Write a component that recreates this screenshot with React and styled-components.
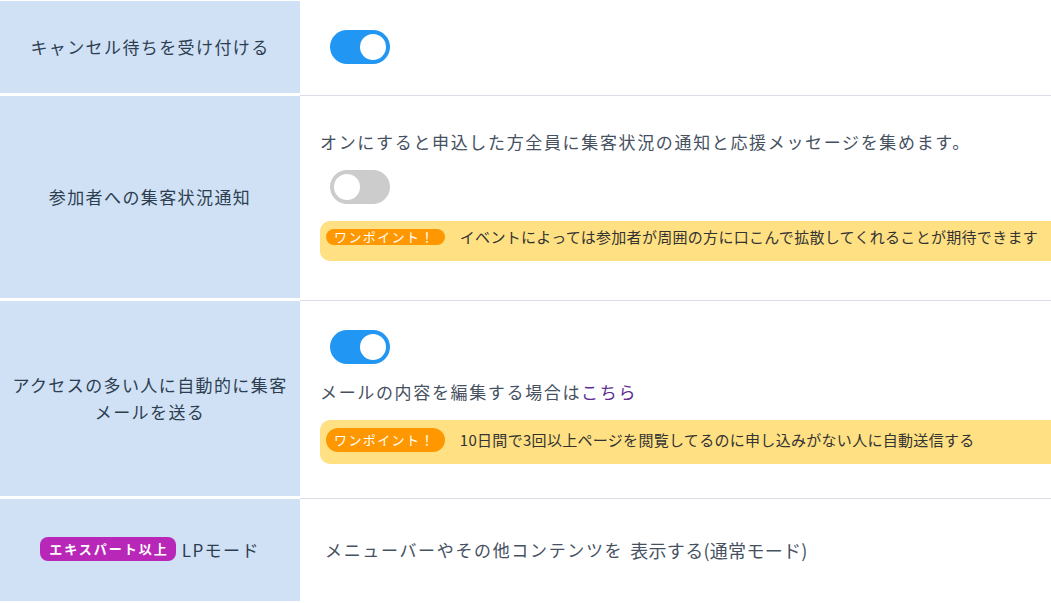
import React from 'react'
import styled, { createGlobalStyle } from 'styled-components'

const Global = createGlobalStyle`
html, body {
  margin: 0;
  background: #fff;
  overflow: hidden;
}
body {
  font-family: "Noto Sans CJK JP", "Noto Sans", sans-serif;
}
`

const Table = styled.div`
width: 1100px;
padding-top: 1px;
`

const Row = styled.div`
display: grid;
grid-template-columns: 300px 1fr;
min-height: ${p => p.$h}px;
`

const Label = styled.div`
background-color: #d0e1f5;
margin-bottom: 3px;
display: flex;
align-items: center;
justify-content: center;
text-align: center;
padding: 0 8px 2px;
font-size: 17px;
letter-spacing: 1.4px;
line-height: 27px;
color: #2c3e50;
`

const Value = styled.div`
border-bottom: 1px solid #dcdde6;
padding: ${p => p.$pt}px 0 0 ${p => p.$pl || 20}px;
display: flex;
flex-direction: column;
align-items: flex-start;
gap: 14px;
`

const Text = styled.div`
font-size: 17px;
letter-spacing: 1.65px;
line-height: 28px;
color: #46515f;
white-space: nowrap;
display: flex;
align-items: center;
`

const Link = styled.a`
color: #5c2d91;
text-decoration: none;
`

const Switch = styled.span`
position: relative;
display: inline-block;
flex-shrink: 0;
margin-left: 10px;
width: 60px;
height: 34px;
border-radius: 34px;
background-color: ${p => (p.$on ? '#2196f3' : '#ccc')};

&::before {
  content: '';
  position: absolute;
  left: 4px;
  top: 4px;
  width: 26px;
  height: 26px;
  border-radius: 50%;
  background-color: #fff;
  transform: translateX(${p => (p.$on ? 26 : 0)}px);
}
`

const Tip = styled.div`
width: 100%;
box-sizing: border-box;
background-color: #ffe082;
border-radius: 10px;
padding: 8px 6px;
min-height: ${p => p.$h}px;
margin-top: ${p => p.$mt || 0}px;
display: flex;
align-items: flex-start;
gap: 15px;
`

const TipBadge = styled.span`
flex-shrink: 0;
background-color: #ff9800;
color: #fff;
font-size: 13px;
letter-spacing: 1.4px;
border-radius: 12px;
padding: 0 10px 0 8px;
height: ${p => p.$h}px;
line-height: ${p => p.$h}px;
`

const TipText = styled.span`
font-size: 15px;
letter-spacing: 0.3px;
color: #333;
line-height: ${p => p.$h}px;
white-space: nowrap;
`

const PlanBadge = styled.span`
background-color: #b927b8;
color: #fff;
font-size: 13px;
font-weight: 700;
letter-spacing: 2px;
border-radius: 8px;
height: 24px;
line-height: 24px;
padding: 0 7px 0 9px;
margin-right: 6px;
`

const ModeSelect = styled.span`
font-size: 18px;
letter-spacing: 0.3px;
color: #46515f;
margin-left: 7px;
`

const App = () => {
  return (
    <>
      <Global />
      <Table>
        <Row $h={95}>
          <Label>キャンセル待ちを受け付ける</Label>
          <Value $pt={29}>
            <Switch $on />
          </Value>
        </Row>

        <Row $h={205}>
          <Label>参加者への集客状況通知</Label>
          <Value $pt={32}>
            <Text>オンにすると申込した方全員に集客状況の通知と応援メッセージを集めます。</Text>
            <Switch />
            <Tip $h={40} $mt={3}>
              <TipBadge $h={16}>ワンポイント！</TipBadge>
              <TipText $h={16}>イベントによっては参加者が周囲の方に口こんで拡散してくれることが期待できます</TipText>
            </Tip>
          </Value>
        </Row>

        <Row $h={198}>
          <Label>アクセスの多い人に自動的に集客メールを送る</Label>
          <Value $pt={29}>
            <Switch $on />
            <Text>メールの内容を編集する場合は<Link href="#">こちら</Link></Text>
            <Tip $h={44}>
              <TipBadge $h={24}>ワンポイント！</TipBadge>
              <TipText $h={24}>10日間で3回以上ページを閲覧してるのに申し込みがない人に自動送信する</TipText>
            </Tip>
          </Value>
        </Row>

        <Row $h={105}>
          <Label>
            <PlanBadge>エキスパート以上</PlanBadge>LPモード
          </Label>
          <Value $pt={37} $pl={25}>
            <Text>
              メニューバーやその他コンテンツを
              <ModeSelect>表示する(通常モード)</ModeSelect>
            </Text>
          </Value>
        </Row>
      </Table>
    </>
  )
}

export default App
